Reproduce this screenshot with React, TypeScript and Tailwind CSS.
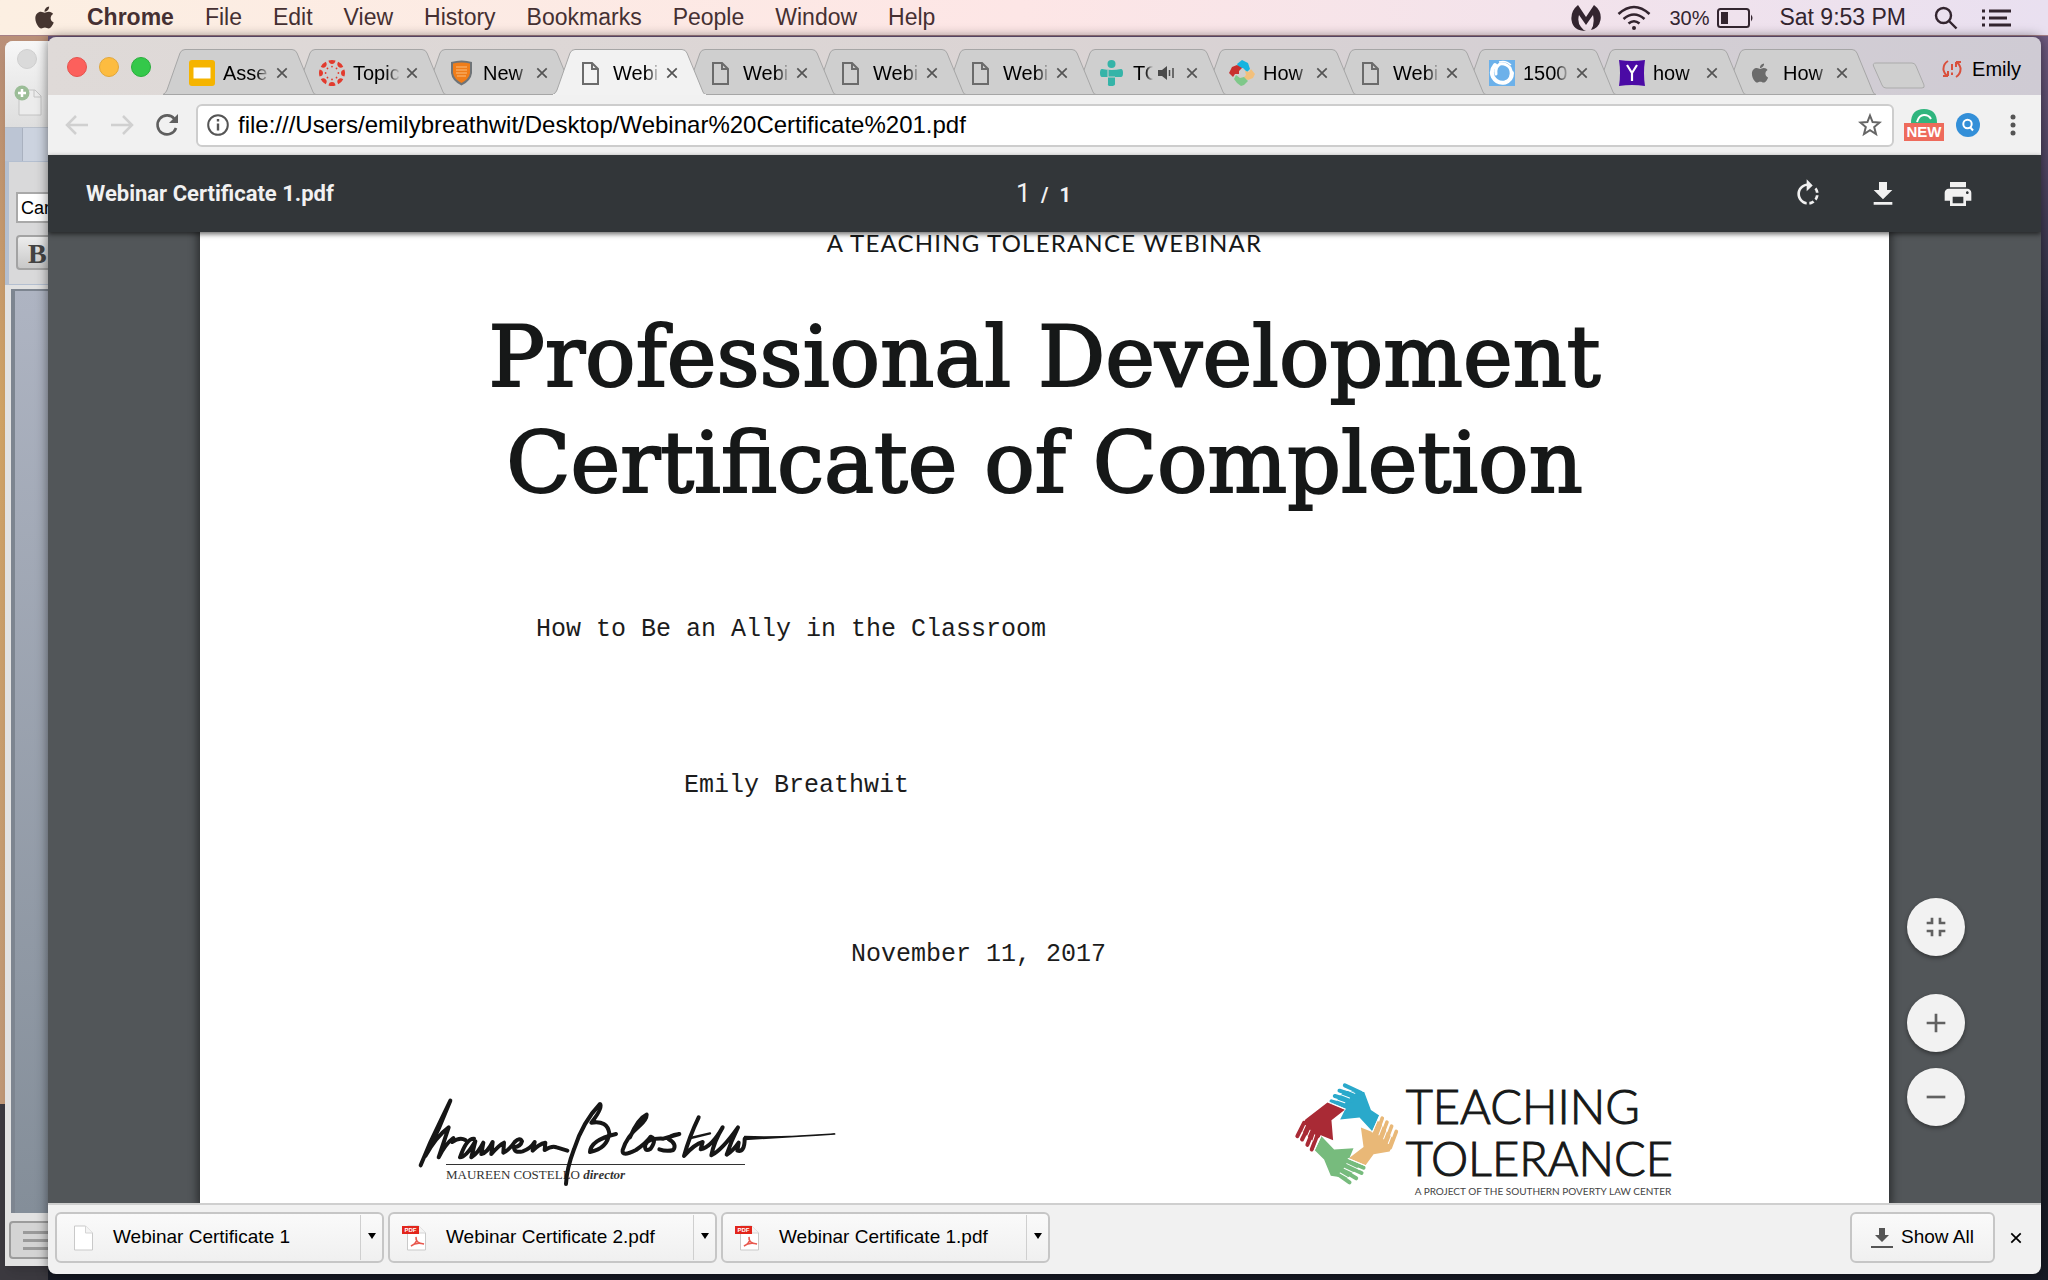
import React from "react";
import { FaApple } from "react-icons/fa";

type Icon = () => React.ReactElement;

const DocIcon: Icon = () => (
  <svg viewBox="0 0 26 26" className="size-[26px]" fill="none" stroke="#6b6b6b" strokeWidth="2">
    <path d="M4 3h9l6 6v15H4z" />
    <path d="M13 3v6h6" />
  </svg>
);

const SlidesIcon: Icon = () => (
  <svg viewBox="0 0 26 26" className="size-[26px]">
    <rect width="26" height="26" rx="3" fill="#f5b400" />
    <rect x="4.500" y="7.500" width="17" height="11" fill="#fff" />
  </svg>
);

const CanvasIcon: Icon = () => (
  <svg viewBox="0 0 26 26" className="size-[26px]" fill="#e23b2e">
    {[0, 45, 90, 135, 180, 225, 270, 315].map((angle) => (
      <g key={angle} transform={`rotate(${angle} 13 13)`}>
        <path d="M9.500 .6Q13-.6 16.500.6Q16 4 13 4T9.500.6z" />
        <circle cx="13" cy="6.600" r=".9" />
      </g>
    ))}
  </svg>
);

const ShieldIcon: Icon = () => (
  <svg viewBox="0 0 26 26" className="size-[26px]">
    <path d="M2 2Q13-1 23 2V13Q22 21 12.500 25.500Q3 21 2 13z" fill="#6f7478" />
    <path d="M4 3.500Q13 1.500 21 3.500V13Q20 19 12.500 23Q5 19 4 13z" fill="#f07d1a" />
    <path d="M7 7h11M7 10h11M7 13h11M8 16h9" stroke="#fbbd7c" strokeWidth="1.200" />
  </svg>
);

const PersonCrossIcon: Icon = () => (
  <svg viewBox="0 0 26 26" className="size-[26px]" fill="#35b4a8">
    <circle cx="12.500" cy="4" r="4" />
    <path d="M3 9q10 2 19 0q2 0 2 4t-2 4h-6v7q0 2-4 2t-3-2v-7H3q-2 0-2-4t2-4z" />
    <path d="M9 17h7M9 10v7" stroke="#cfcfcf" strokeWidth="1" fill="none" />
  </svg>
);

const HandsMini: Icon = () => (
  <svg viewBox="0 0 26 26" className="size-[26px]">
    <path d="M8 4L13 0L19 3L21 9L18 12L14 8L10 8z" fill="#16b4e0" />
    <path d="M0 13L3 7L8 5L13 8L10 11L10 14L6 14L4 17z" fill="#c9302e" />
    <path d="M26 14L22 9L20 12L16 11L17 15L14 18L19 20L24 18z" fill="#f2c07c" />
    <path d="M7 15L11 18L15 17L19 21L15 25L12 26L8 23L5 19z" fill="#7fc88a" />
  </svg>
);

const SwirlIcon: Icon = () => (
  <svg viewBox="0 0 26 26" className="size-[26px]" fill="none">
    <rect width="26" height="26" fill="#6cb1ea" />
    <path d="M6 5Q1 11 4 17Q8 24 16 22.500Q23 20 23 13" stroke="#fff" strokeWidth="4" strokeLinecap="round" />
    <path d="M20 20Q24 14 21 8Q17 3 11 4Q6 7 7 14" stroke="#fff" strokeWidth="3" strokeLinecap="round" />
    <path d="M10 2Q17 0 22 5" stroke="#fff" strokeWidth="1.500" />
  </svg>
);

const YahooIcon: Icon = () => (
  <svg viewBox="0 0 26 26" className="size-[26px]">
    <path d="M0 0Q13 2 26 0Q24 13 26 26Q13 24 0 26Q2 13 0 0z" fill="#4b0aa5" />
    <path d="M8 5l5 8 5-8M13 13v8" stroke="#fff" strokeWidth="2.200" fill="none" />
  </svg>
);

const AppleTabIcon: Icon = () => <FaApple className="size-[22px] text-[#6b6b6b]" />;

const CloseGlyph = ({ className }: { className: string }) => (
  <svg viewBox="0 0 14 14" className={className} stroke="currentColor" strokeWidth="2">
    <path d="M1.500 1.500l11 11M12.500 1.500l-11 11" />
  </svg>
);

const tabs: { title: string; icon: Icon; active?: boolean; audio?: boolean }[] = [
  { title: "Asse", icon: SlidesIcon },
  { title: "Topic", icon: CanvasIcon },
  { title: "New", icon: ShieldIcon },
  { title: "Webi", icon: DocIcon, active: true },
  { title: "Webi", icon: DocIcon },
  { title: "Webi", icon: DocIcon },
  { title: "Webi", icon: DocIcon },
  { title: "TO", icon: PersonCrossIcon, audio: true },
  { title: "How", icon: HandsMini },
  { title: "Webi", icon: DocIcon },
  { title: "1500", icon: SwirlIcon },
  { title: "how", icon: YahooIcon },
  { title: "How", icon: AppleTabIcon },
];

function MenuBar() {
  const menus = ["File", "Edit", "View", "History", "Bookmarks", "People", "Window", "Help"];
  return (
    <header className="flex h-9 shrink-0 items-center border-b border-[#a58087] bg-linear-to-r from-[#fcefe2] via-[#fde6e6] to-[#e9e0f0] pr-[37px] pl-8 text-[23px] text-[#453032]">
      <button aria-label="Apple menu" className="mr-[30px] text-[#453530]">
        <FaApple className="size-[25px]" />
      </button>
      <nav className="flex items-center gap-[31px]">
        <button className="font-bold">Chrome</button>
        {menus.map((m) => (
          <button key={m}>{m}</button>
        ))}
      </nav>
      <div className="ml-auto flex items-center text-[#33252f]">
        <svg viewBox="0 0 30 26" className="mr-4 h-[26px] w-[30px]" fill="currentColor">
          <path d="M7 0L15 12L23 0Q31 6 29.500 15Q28 23 20 25Q24 19 22 10L15 20L8 10Q6 17 10 22Q12 25 15 26Q2 26 .5 15Q-.5 6 7 0z" />
        </svg>
        <svg viewBox="0 0 34 26" className="mr-[18px] h-[26px] w-[34px]" fill="none" stroke="currentColor" strokeWidth="2.600">
          <path d="M1.500 9Q17-5 32.500 9M6.500 14Q17 5 27.500 14M11.500 18.500Q17 14 22.500 18.500" />
          <circle cx="17" cy="23" r="2" fill="currentColor" stroke="none" />
        </svg>
        <span className="text-xl">30%</span>
        <svg viewBox="0 0 38 20" className="mr-6 ml-2 h-5 w-[38px]" fill="none" stroke="currentColor" strokeWidth="2">
          <rect x="1" y="1" width="31" height="18" rx="2.500" />
          <rect x="4" y="4" width="7" height="12" fill="currentColor" stroke="none" />
          <path d="M34 6.500q3 3.500 0 7z" fill="currentColor" stroke="none" />
        </svg>
        <span>Sat 9:53 PM</span>
        <button aria-label="Spotlight" className="ml-7">
          <svg viewBox="0 0 24 24" className="size-6" fill="none" stroke="currentColor" strokeWidth="2.400">
            <circle cx="9.500" cy="9.500" r="7.500" />
            <path d="M15 15l7.500 7.500" />
          </svg>
        </button>
        <button aria-label="Notification Center" className="ml-6">
          <svg viewBox="0 0 29 18" className="h-[18px] w-[29px]" stroke="currentColor" strokeWidth="3">
            <path d="M0 2h3M0 9h3M0 16h3M7 2h22M7 9h18M7 16h22" />
          </svg>
        </button>
      </div>
    </header>
  );
}

function WordWindow() {
  return (
    <div className="absolute top-[5px] bottom-[14px] left-[5px] flex w-60 flex-col overflow-hidden rounded-t-lg bg-[#e2e2e2] shadow-lg">
      <div className="flex h-[86px] flex-col gap-4 bg-linear-to-b from-[#f7f7f7] to-[#dedede] pt-2 pl-3">
        <span className="size-5 rounded-full border border-[#cfcfcf] bg-[#dadada]" />
        <svg viewBox="0 0 30 32" className="-ml-[3px] h-8 w-[30px]">
          <path d="M5 5h16l6 6v19H5z" fill="#ececec" stroke="#c4c4c4" />
          <path d="M20 5v7h7" fill="none" stroke="#c4c4c4" />
          <circle cx="8" cy="8" r="7.500" fill="#9bbd97" />
          <path d="M8 4v8M4 8h8" stroke="#fff" strokeWidth="2.500" />
        </svg>
      </div>
      <div className="flex h-[34px] border-t border-[#b9c0cb] bg-[#ccd3df]">
        <span className="w-[18px] border-r border-[#a9b1bf] bg-[#bcc5d4]" />
      </div>
      <div className="h-[124px] border-y border-l-4 border-[#b4bfd0] bg-[#d9d9da] pt-[30px] pl-[7px]">
        <div className="h-[31px] border-2 border-[#a9a9a9] bg-white pl-[3px] text-lg leading-7 text-black">Car</div>
        <div className="mt-3 h-[35px] rounded border-2 border-[#a3a3a3] bg-linear-to-b from-[#ededed] to-[#c8c8c8] pl-[10px] font-['Liberation_Serif',serif] text-[28px] leading-[34px] font-bold text-[#444]">
          B
        </div>
      </div>
      <div className="mt-1 ml-[6px] flex-1 border-t-2 border-l-4 border-[#7d8590] bg-linear-to-b from-[#aeb4c2] to-[#848e99]" />
      <div className="h-[53px] pt-2 pl-1">
        <div className="flex h-[38px] flex-col justify-center gap-[5px] rounded border-2 border-[#9c9c9c] bg-[#d4d4d4] pl-3">
          <span className="h-[3px] w-[26px] bg-[#9a9a9a]" />
          <span className="h-[3px] w-[26px] bg-[#9a9a9a]" />
          <span className="h-[3px] w-[26px] bg-[#9a9a9a]" />
        </div>
      </div>
    </div>
  );
}

function TabStrip() {
  return (
    <div className="flex h-[58px] shrink-0 items-end bg-linear-to-r from-[#dfdad8] via-[#dbd4d4] to-[#cfcbd4]">
      <div className="flex h-full shrink-0 items-center gap-3 pt-[2px] pr-3 pl-[19px]">
        <button aria-label="Close window" className="size-5 rounded-full border border-[#e6524d] bg-[#fc605c]" />
        <button aria-label="Minimize window" className="size-5 rounded-full border border-[#e2a73a] bg-[#fdbc40]" />
        <button aria-label="Zoom window" className="size-5 rounded-full border border-[#29ae3c] bg-[#34c84a]" />
      </div>
      <div role="tablist" className="isolate flex h-[46px] shrink-0">
        {tabs.map((tab, i) => {
          const TabIcon = tab.icon;
          return (
            <div key={i} className="relative -mr-[23px] h-[46px] w-[153px]" style={{ zIndex: tab.active ? 20 : 15 - i }}>
              <svg viewBox="0 0 153 46" className="absolute inset-0 size-full">
                <path
                  d="M0 45.500Q3 44 4 41L17 4Q18.500 .5 22 .5H129Q132.500 .5 134 4L150 43Q151 45.500 153 45.500"
                  fill={tab.active ? "#f2f2f2" : "#cfcfcf"}
                  stroke="#a6a6a6"
                />
                <path d="M0 45.500H153" stroke={tab.active ? "#f2f2f2" : "#a6a6a6"} />
              </svg>
              <div className="relative flex h-full items-center pt-[2px] pl-[26px]">
                <span className="flex w-[34px] shrink-0">
                  <TabIcon />
                </span>
                <button
                  role="tab"
                  aria-selected={!!tab.active}
                  className={
                    tab.audio
                      ? "w-5 overflow-hidden mask-r-from-60% text-left text-xl text-black"
                      : "w-[47px] overflow-hidden mask-r-from-70% text-left text-xl text-black"
                  }
                >
                  {tab.title}
                </button>
                {tab.audio && (
                  <svg viewBox="0 0 18 14" className="mr-1 ml-[5px] h-[14px] w-[18px] text-[#4a4a4a]" fill="currentColor">
                    <path d="M0 4h4l5-4v14l-5-4H0z" />
                    <path d="M11.500 4v6M15 2v10" stroke="currentColor" strokeWidth="1.500" />
                  </svg>
                )}
                <button aria-label="Close tab" className="ml-[6px] text-[#555]">
                  <CloseGlyph className="size-3" />
                </button>
              </div>
            </div>
          );
        })}
      </div>
      <button aria-label="New tab" className="mb-[6px] ml-[19px] shrink-0">
        <svg viewBox="0 0 54 27" className="h-[27px] w-[54px]">
          <path d="M4 1H40Q43 1 44 4L52 23Q53 26 50 26H14Q11 26 10 23L1.500 4Q.5 1 4 1z" fill="#cfcfcf" stroke="#ababab" />
        </svg>
      </button>
      <button className="mr-[20px] mb-3 ml-auto flex items-center gap-[10px] text-xl text-black">
        <svg viewBox="0 0 20 20" className="size-5" fill="none" stroke="#d9503c" strokeWidth="2">
          <path d="M6 2Q1 5 1.500 11Q3 16 6 17M6 17v-5M6 17H1M14 18Q19 15 18.500 9Q17 4 14 3M14 3v5M14 3h5M10 5v6M10 13.500v2.500" />
        </svg>
        Emily
      </button>
    </div>
  );
}

function AddressBar() {
  return (
    <div className="flex h-[60px] shrink-0 items-center bg-[#f1f1f1] pr-[21px] pl-[17px]">
      <button aria-label="Back" className="mr-[21px] text-[#d0d0d0]">
        <svg viewBox="0 0 24 22" className="h-[22px] w-6" fill="none" stroke="currentColor" strokeWidth="2.500">
          <path d="M23 11H2M11 2L2 11l9 9" />
        </svg>
      </button>
      <button aria-label="Forward" className="mr-[21px] text-[#d0d0d0]">
        <svg viewBox="0 0 24 22" className="h-[22px] w-6" fill="none" stroke="currentColor" strokeWidth="2.500">
          <path d="M1 11h21M13 2l9 9-9 9" />
        </svg>
      </button>
      <button aria-label="Reload" className="mr-[17px] text-[#5f5f5f]">
        <svg viewBox="0 0 24 24" className="size-6" fill="none" stroke="currentColor" strokeWidth="2.600">
          <path d="M21 15A9.500 9.500 0 1 1 19.500 6" />
          <path d="M23 1v9h-9z" fill="currentColor" stroke="none" />
        </svg>
      </button>
      <form className="flex h-[43px] flex-1 items-center rounded-md border-2 border-[#cdcdcd] bg-white pr-[10px] pl-[9px]">
        <svg viewBox="0 0 22 22" className="size-[22px]" fill="none" stroke="#555" strokeWidth="2">
          <circle cx="11" cy="11" r="9.800" />
          <path d="M11 9.500v7M11 5v2.500" strokeWidth="2.400" />
        </svg>
        <input
          aria-label="Address"
          defaultValue="file:///Users/emilybreathwit/Desktop/Webinar%20Certificate%201.pdf"
          className="ml-[9px] min-w-0 flex-1 text-2xl text-black outline-none"
        />
        <button type="button" aria-label="Bookmark this page" className="text-[#666]">
          <svg viewBox="0 0 24 24" className="size-6" fill="none" stroke="currentColor" strokeWidth="2">
            <path d="M12 2.500l2.600 6.600 7 .4-5.400 4.500 1.800 7L12 17.100 6 21l1.800-7-5.400-4.500 7-.4z" />
          </svg>
        </button>
      </form>
      <button aria-label="New extension" className="ml-[10px] flex w-10 flex-col items-center">
        <svg viewBox="0 0 26 14" className="h-[14px] w-[26px]">
          <path d="M0 14Q0 0 13 0T26 14z" fill="#2fb57e" />
          <path d="M6 13Q8 6 13 6T20 10" fill="none" stroke="#fff" strokeWidth="2" />
        </svg>
        <span className="w-10 bg-[#ee6b5c] text-center text-[15px] leading-[18px] font-bold text-white">NEW</span>
      </button>
      <button aria-label="Search extension" className="ml-3">
        <svg viewBox="0 0 24 24" className="size-6" fill="none" stroke="#fff" strokeWidth="2">
          <circle cx="12" cy="12" r="12" fill="#338fd8" stroke="none" />
          <circle cx="11.500" cy="11" r="4.200" />
          <path d="M14 14l3 3.500" />
        </svg>
      </button>
      <button aria-label="Chrome menu" className="ml-[26px]">
        <svg viewBox="0 0 14 24" className="h-6 w-[14px]" fill="#555">
          <circle cx="7" cy="4" r="2.500" />
          <circle cx="7" cy="12" r="2.500" />
          <circle cx="7" cy="20" r="2.500" />
        </svg>
      </button>
    </div>
  );
}

const pdfActions = [
  {
    label: "Rotate clockwise",
    d: "M15.550 5.550L11 1v3.070C7.060 4.560 4 7.920 4 12s3.050 7.440 7 7.930v-2.020c-2.840-.48-5-2.940-5-5.910s2.160-5.430 5-5.910V10l4.550-4.450zM19.930 11c-.17-1.390-.72-2.730-1.620-3.890l-1.420 1.420c.54.75.88 1.600 1.020 2.470h2.020zM13 17.900v2.020c1.390-.17 2.740-.71 3.900-1.610l-1.440-1.440c-.75.54-1.590.89-2.460 1.030zm3.890-2.420l1.420 1.410c.9-1.160 1.450-2.500 1.620-3.890h-2.020c-.14.87-.48 1.720-1.020 2.480z",
  },
  { label: "Download", d: "M19 9h-4V3H9v6H5l7 7 7-7zM5 18v2h14v-2H5z" },
  {
    label: "Print",
    d: "M19 8H5c-1.660 0-3 1.340-3 3v6h4v4h12v-4h4v-6c0-1.660-1.340-3-3-3zm-3 11H8v-5h8v5zm3-7c-.55 0-1-.45-1-1s.45-1 1-1 1 .45 1 1-.45 1-1 1zm-1-9H6v4h12V3z",
  },
];

function PdfToolbar() {
  return (
    <div className="relative z-10 grid h-[77px] shrink-0 grid-cols-3 items-center bg-[#323639] px-[38px] font-[Roboto,sans-serif] text-[#f1f1f1] shadow-[0_2px_5px_rgba(0,0,0,0.6)]">
      <h2 className="text-[22px] font-bold">Webinar Certificate 1.pdf</h2>
      <div className="flex items-baseline justify-center gap-[11px] pr-[2px]">
        <input aria-label="Page number" defaultValue="1" className="w-[14px] bg-transparent text-[26px] outline-none" />
        <span className="text-xl font-bold">/</span>
        <span className="text-xl font-bold">1</span>
      </div>
      <div className="flex justify-end gap-[43px] pr-[29px]">
        {pdfActions.map((a) => (
          <button key={a.label} aria-label={a.label}>
            <svg viewBox="0 0 24 24" className="size-8" fill="currentColor">
              <path d={a.d} />
            </svg>
          </button>
        ))}
      </div>
    </div>
  );
}

function Signature() {
  return (
    <div className="relative w-[430px] pt-[84px]">
      <div className="ml-7 w-[299px] border-t border-[#333] pt-px font-['Liberation_Serif',serif] text-[13px] leading-[18px] whitespace-nowrap text-[#333]">
        MAUREEN COSTELLO <em className="font-bold">director</em>
      </div>
      <svg
        viewBox="54 30 1290 330"
        className="absolute top-0 left-0 h-[110px] w-[430px]"
        fill="none"
        stroke="#161616"
        strokeWidth="12"
        strokeLinecap="round"
        strokeLinejoin="round"
      >
        <path d="M62 286Q90 215 122 152L151 92L118 172L76 258Q108 200 146 172L116 262Q136 222 160 204L156 216Q180 200 196 210" />
        <path d="M222 206Q200 204 180 262Q198 262 226 214L214 262Q234 250 250 218L244 252Q262 248 278 216L274 252Q296 226 312 218L310 248Q328 240 344 216Q360 200 366 214Q362 230 342 232Q342 250 368 244Q392 236 404 216L398 242Q416 222 436 218L434 240Q456 226 470 232L502 242" />
        <path d="M498 342Q500 296 522 238Q548 156 600 102Q610 112 574 158Q622 150 628 190Q622 236 570 246Q572 210 648 192" />
        <path d="M690 202Q714 146 740 134Q740 148 718 168Q680 200 668 240Q664 262 708 240Q740 218 752 200Q772 206 752 236Q732 248 736 224Q744 204 790 206L838 192Q806 196 806 208Q832 222 820 240Q800 246 778 238" />
        <path d="M896 142Q868 200 852 258Q884 222 908 216L902 238Q934 232 968 172Q942 214 934 256Q966 240 1014 172Q994 212 980 254Q998 244 1016 218L1012 242Q1034 248 1034 206" />
        <path d="M872 204L930 190" strokeWidth="7" />
        <path d="M1034 200Q1150 204 1304 192Q1160 200 1034 208" strokeWidth="5" fill="#161616" />
      </svg>
    </div>
  );
}

function HandsLogo() {
  return (
    <svg viewBox="40 30 320 320" className="size-[107px] shrink-0" strokeLinecap="round">
      <g fill="#a92a35" stroke="#a92a35">
        <path d="M74 148L140 97L192 119L152 150L157 210L124 197L98 214L58 178z" stroke="none" />
        <path d="M70 158L50 198M82 172L64 208M96 184L80 224M110 194L93 238" strokeWidth="12" />
      </g>
      <g fill="#2aa9cb" stroke="#2aa9cb">
        <path d="M190 62L250 66L270 120L295 136L274 183L236 142L178 148L194 116L160 102z" stroke="none" />
        <path d="M240 68L192 46M226 78L176 62M212 92L162 78M196 106L152 94" strokeWidth="12" />
      </g>
      <g fill="#e9b877" stroke="#e9b877">
        <path d="M290 150L340 210L326 244L278 252L254 285L204 264L248 230L240 172L276 186z" stroke="none" />
        <path d="M304 144L288 190M318 156L300 204M332 168L314 216M346 184L328 232" strokeWidth="11" />
      </g>
      <g fill="#77bb7d" stroke="#77bb7d">
        <path d="M122 198L160 238L218 234L204 268L232 290L200 324L150 316L130 268L102 240z" stroke="none" />
        <path d="M200 272L248 292M194 286L242 308M186 300L226 324M172 312L206 336" strokeWidth="12" />
      </g>
      <g fill="none" stroke="#fff" strokeWidth="3">
        <path d="M140 94L194 117M297 134L274 186M256 287L202 265M121 196L100 242" />
        <path d="M66 184L74 166M80 198L88 180M96 212L102 194M184 54L222 70M170 70L206 84M158 86L192 98" />
        <path d="M311 150L294 194M325 162L308 206M339 176L322 220M198 280L236 298M190 294L228 312M178 308L212 328" />
      </g>
    </svg>
  );
}

function Certificate() {
  return (
    <article className="mx-[152px] min-h-full flex-1 bg-white text-[#161818] shadow-[0_0_8px_3px_rgba(0,0,0,0.45)]">
      <p className="text-center font-[Lato,sans-serif] text-2xl leading-[21px] tracking-wider">A TEACHING TOLERANCE WEBINAR</p>
      <h1 className="mt-[51px] text-center font-['DejaVu_Serif',serif] text-[84px] leading-[106px] [-webkit-text-stroke:2px_#161818]">
        Professional Development
        <br />
        Certificate of Completion
      </h1>
      <div className="font-['Liberation_Mono',monospace] text-[25px] leading-[30px] whitespace-nowrap text-[#1c1c1c]">
        <p className="mt-[99px] pl-[336px]">How to Be an Ally in the Classroom</p>
        <p className="mt-[126px] pl-[484px]">Emily Breathwit</p>
        <p className="mt-[139px] pl-[651px]">November 11, 2017</p>
      </div>
      <div className="mt-[110px] flex items-start justify-between pr-[216px] pl-[218px]">
        <Signature />
        <div className="flex gap-[5px] font-[Lato,sans-serif]">
          <HandsLogo />
          <div className="whitespace-nowrap">
            <p className="text-[47px] leading-[52px] font-light [-webkit-text-stroke:1px_#161818]">
              TEACHING
              <br />
              TOLERANCE
            </p>
            <p className="pl-[9px] text-[10px] leading-[14px] text-[#444]">A PROJECT OF THE SOUTHERN POVERTY LAW CENTER</p>
          </div>
        </div>
      </div>
    </article>
  );
}

const zoomButtons = [
  { label: "Fit to page", d: "M5 16h3v3h2v-5H5v2zm3-8H5v2h5V5H8v3zm6 11h2v-3h3v-2h-5v5zm2-11V5h-2v5h5V8h-3z", gap: "mb-[38px]" },
  { label: "Zoom in", d: "M19 13h-6v6h-2v-6H5v-2h6V5h2v6h6v2z", gap: "mb-4" },
  { label: "Zoom out", d: "M19 13H5v-2h14v2z", gap: "" },
];

function Viewer() {
  return (
    <main className="relative flex min-h-0 flex-1 items-start overflow-hidden bg-[#525659]">
      <Certificate />
      <div className="absolute right-[76px] bottom-[77px] flex flex-col">
        {zoomButtons.map((b) => (
          <button
            key={b.label}
            aria-label={b.label}
            className={`flex size-[58px] items-center justify-center rounded-full bg-[#f2f2f2] text-[#616161] shadow-[0_2px_4px_rgba(0,0,0,0.4)] ${b.gap}`}
          >
            <svg viewBox="0 0 24 24" className="size-8" fill="currentColor">
              <path d={b.d} />
            </svg>
          </button>
        ))}
      </div>
    </main>
  );
}

function FileIcon({ pdf }: { pdf: boolean }) {
  return (
    <svg viewBox="0 0 26 26" className="size-[26px] shrink-0">
      <path d="M5.500 1h11l7 7v17h-18z" fill="#fff" stroke="#c9c9c9" />
      <path d="M16.500 1v7h7" fill="#f4f4f4" stroke="#d4d4d4" />
      {pdf && (
        <>
          <path d="M9 21Q16 18 14 12Q13 18 22 19Q14 17 9 21z" fill="none" stroke="#e8594f" strokeWidth="1.500" />
          <rect y="1" width="17" height="8" fill="#e2251b" />
          <text x="8.500" y="7.300" fontSize="6" fontWeight="bold" textAnchor="middle" fill="#fff">
            PDF
          </text>
        </>
      )}
    </svg>
  );
}

function DownloadShelf() {
  const files = ["Webinar Certificate 1", "Webinar Certificate 2.pdf", "Webinar Certificate 1.pdf"];
  return (
    <footer className="flex h-[71px] shrink-0 items-start gap-1 border-t-2 border-[#cfcfcf] bg-[#f1f1f1] pt-[7px] pr-3 pl-[7px] text-[19px] text-black">
      {files.map((f) => (
        <div key={f} className="flex h-[51px] w-[329px] items-center rounded-md border-2 border-[#c6c6c6] bg-linear-to-b from-[#fafafa] to-[#f0f0f0]">
          <button className="flex flex-1 items-center gap-[18px] pl-3">
            <FileIcon pdf={f.endsWith(".pdf")} />
            {f}
          </button>
          <button aria-label={`Options for ${f}`} className="flex h-[45px] w-[22px] items-center justify-center border-l border-[#cfcfcf] pb-1">
            <svg viewBox="0 0 8 6" className="h-[6px] w-2">
              <path d="M0 0h8L4 6z" />
            </svg>
          </button>
        </div>
      ))}
      <button className="ml-auto flex h-[51px] w-[145px] items-center justify-center gap-2 rounded-md border-2 border-[#c6c6c6] bg-linear-to-b from-[#fafafa] to-[#f0f0f0]">
        <svg viewBox="0 0 22 20" className="h-5 w-[22px]" fill="#555">
          <path d="M8 0h6v7h4l-7 7-7-7h4zM0 18h22v2H0z" />
        </svg>
        Show All
      </button>
      <button aria-label="Close downloads bar" className="ml-1 flex h-[51px] w-[26px] items-center justify-center">
        <CloseGlyph className="size-3" />
      </button>
    </footer>
  );
}

export default function App() {
  return (
    <div className="flex h-screen flex-col overflow-hidden bg-[#14161f] font-['Liberation_Sans',Arial,sans-serif]">
      <MenuBar />
      <div className="relative flex min-h-0 flex-1 bg-linear-to-b from-[#6f5a80] via-[#262a3c] via-25% to-[#171a25]">
        <div className="absolute inset-y-0 left-0 w-12 bg-linear-to-b from-[#b98f78] via-[#d3a566] via-30% to-[#c29a78] to-85%" />
        <div className="absolute bottom-0 left-0 h-44 w-12 bg-[#3c3a40]" />
        <WordWindow />
        <div className="relative mt-px mr-[7px] mb-[6px] ml-12 flex min-w-0 flex-1 flex-col overflow-hidden rounded-lg shadow-[0_0_12px_rgba(0,0,0,0.5)]">
          <TabStrip />
          <AddressBar />
          <PdfToolbar />
          <Viewer />
          <DownloadShelf />
        </div>
      </div>
    </div>
  );
}
